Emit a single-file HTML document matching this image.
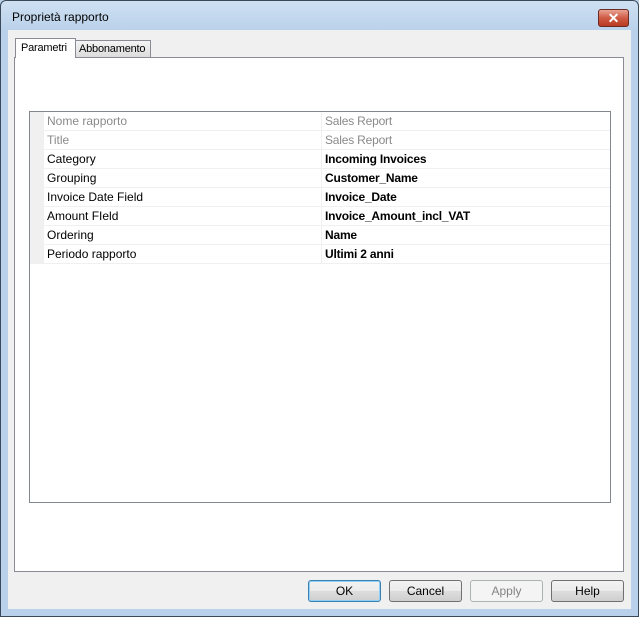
<!DOCTYPE html>
<html><head><meta charset="utf-8"><style>
*{margin:0;padding:0;box-sizing:border-box}
body{width:639px;height:617px;overflow:hidden;font-family:"Liberation Sans",sans-serif;font-size:12px;background:#b9d1ea;position:relative}
.frame{position:absolute;left:0;top:0;width:639px;height:617px;border:1px solid #3a4a5a;border-radius:6px 6px 0 0;background:linear-gradient(#cfe0f2 0,#b9d1ea 30px,#b9d1ea 100%)}
.title{position:absolute;left:12px;top:10px;font-size:12px;color:#000}
.close{position:absolute;left:598px;top:9px;width:31px;height:18px;border:1px solid #6b2a22;border-radius:3px;background:linear-gradient(#e9a493,#cf5a44 50%,#b83a22);color:#fff;font-weight:bold;font-size:14px;text-align:center;line-height:16px}
.client{position:absolute;left:8px;top:30px;width:623px;height:579px;background:#f0f0f0}
.panel{position:absolute;left:14px;top:57px;width:610px;height:515px;background:#fff;border:1px solid #898c95}
.tab{position:absolute;background:#fff;border:1px solid #898c95;font-size:11px;padding:0 3px;letter-spacing:-0.2px}
.grid{position:absolute;left:29px;top:111px;width:582px;height:392px;border:1px solid #828790;background:#fff}
.gut{position:absolute;left:0;top:0;width:14px;height:152px;background:#f0f0f0}
.row{position:absolute;left:14px;width:566px;height:19px;border-bottom:1px solid #f0f0f0;font-size:12px;line-height:18px}
.row .k{position:absolute;left:3px}
.row .v{position:absolute;left:277px;border-left:1px solid #f0f0f0;padding-left:3px;height:18px;font-weight:bold;letter-spacing:-0.2px}
.g{color:#8a8a8a}.g .v{font-weight:normal}
.btn{position:absolute;top:580px;width:73px;height:22px;border:1px solid #707070;border-radius:3px;background:linear-gradient(#f2f2f2,#ebebeb 50%,#dddddd 51%,#cfcfcf);text-align:center;line-height:20px;font-size:12px}
</style></head><body>
<div class="frame"></div>
<div class="title">Proprietà rapporto</div>
<div class="close">✕</div>
<div class="client"></div>
<div class="panel"></div>
<div class="tab" style="left:75px;top:40px;height:18px;width:76px;background:linear-gradient(#f4f4f4,#dcdcdc);line-height:16px">Abbonamento</div>
<div class="tab" style="left:15px;top:38px;height:20px;width:61px;border-bottom:none;line-height:18px;padding-left:5px">Parametri</div>
<div class="grid">
<div class="gut"></div>
<div class="row g" style="top:0"><span class="k">Nome rapporto</span><span class="v">Sales Report</span></div>
<div class="row g" style="top:19px"><span class="k">Title</span><span class="v">Sales Report</span></div>
<div class="row" style="top:38px"><span class="k">Category</span><span class="v">Incoming Invoices</span></div>
<div class="row" style="top:57px"><span class="k">Grouping</span><span class="v">Customer_Name</span></div>
<div class="row" style="top:76px"><span class="k">Invoice Date Field</span><span class="v">Invoice_Date</span></div>
<div class="row" style="top:95px"><span class="k">Amount FIeld</span><span class="v">Invoice_Amount_incl_VAT</span></div>
<div class="row" style="top:114px"><span class="k">Ordering</span><span class="v">Name</span></div>
<div class="row" style="top:133px"><span class="k">Periodo rapporto</span><span class="v">Ultimi 2 anni</span></div>
</div>
<div class="btn" style="left:308px;border-color:#3c7fb1;box-shadow:inset 0 0 0 1px #8fd0f5">OK</div>
<div class="btn" style="left:389px">Cancel</div>
<div class="btn" style="left:470px;border-color:#adb2b5;background:#f4f4f4;color:#838383">Apply</div>
<div class="btn" style="left:551px">Help</div>
</body></html>
